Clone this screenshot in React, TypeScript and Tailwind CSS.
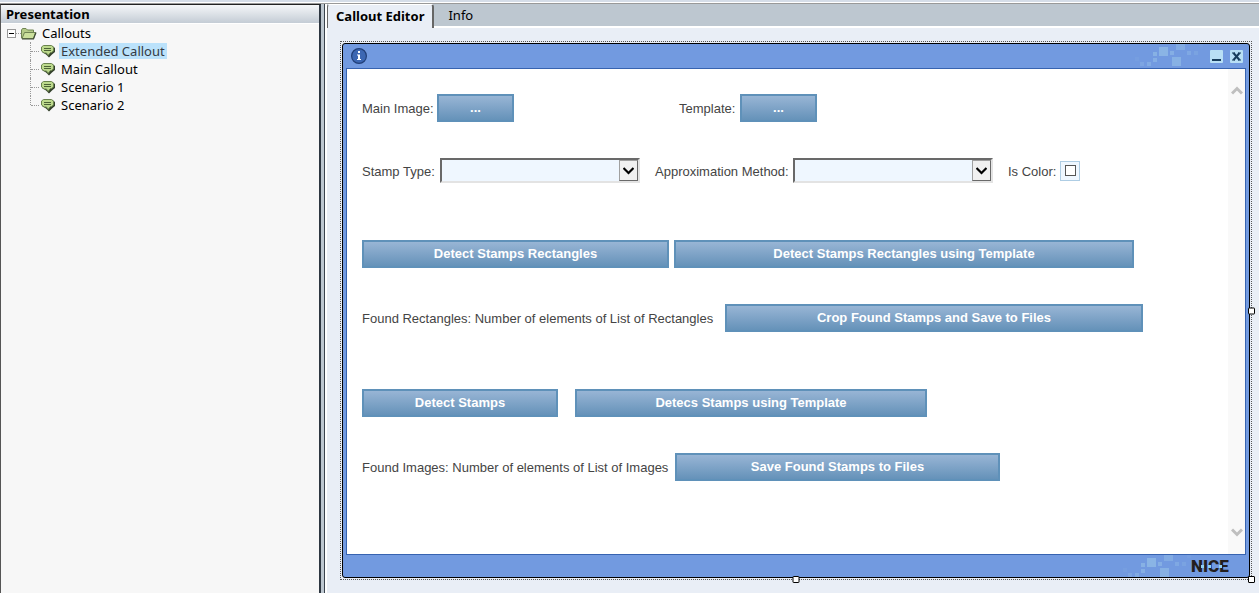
import { useState } from 'react';
import type { ReactNode } from 'react';

const callouts = ['Extended Callout', 'Main Callout', 'Scenario 1', 'Scenario 2'];

const squares = [
  { x: 0, y: 13, w: 4, h: 4, o: 0.08 },
  { x: 5, y: 18, w: 4, h: 4, o: 0.2 },
  { x: 12, y: 18, w: 4, h: 4, o: 0.3 },
  { x: 18, y: 14, w: 4, h: 4, o: 0.35 },
  { x: 18, y: 8, w: 4, h: 4, o: 0.4 },
  { x: 24, y: 3, w: 9, h: 9, o: 0.45 },
  { x: 35, y: 7, w: 4, h: 4, o: 0.35 },
  { x: 41, y: 0, w: 9, h: 6, o: 0.3 },
  { x: 37, y: 13, w: 9, h: 9, o: 0.4 },
  { x: 52, y: 7, w: 4, h: 4, o: 0.25 },
  { x: 59, y: 7, w: 4, h: 4, o: 0.15 },
  { x: 64, y: 0, w: 4, h: 3, o: 0.08 },
];

const SquaresPattern = () => (
  <svg width="68" height="22" viewBox="0 0 68 22" className="self-start" aria-hidden="true">
    {squares.map((s) => (
      <rect key={`${s.x}-${s.y}`} x={s.x} y={s.y} width={s.w} height={s.h} fill="#a8d4ea" opacity={s.o} />
    ))}
  </svg>
);

const FolderIcon = () => (
  <svg width="16" height="13" viewBox="0 0 16 13" aria-hidden="true">
    <path d="M0.500 11V3L1.500 1.500H5L6.500 3H12.500V11Z" fill="#b4cb88" stroke="#6f8353" />
    <path d="M1 11.500L3.500 5.500H14.500L12.500 11.500Z" fill="#cbe09c" stroke="#6f8353" />
    <path d="M1 12H12.500L15 5.500" fill="none" stroke="#3f4a35" strokeWidth="1.200" />
  </svg>
);

const CalloutIcon = () => (
  <svg width="15" height="14" viewBox="0 0 15 14" aria-hidden="true">
    <path d="M3 2H11.500L14 4V8L11 10.500L8 13.500L5 10.500L1 8V4Z" fill="#33402b" />
    <path d="M2.500 1.500H10.500L12.500 3V7L10.500 8.500H9.500L7 11.500L5.500 9H3L0.500 7V3Z" fill="#bcd98c" stroke="#6a834d" />
    <path d="M3 4.500H10M3 6.500H10" stroke="#4c6335" />
  </svg>
);

const InfoIcon = () => (
  <svg width="16" height="16" viewBox="0 0 16 16" aria-hidden="true">
    <circle cx="8" cy="8" r="7.4" fill="#3c67b3" stroke="#213f78" strokeWidth="1.2" />
    <path d="M7 3H9V5H7ZM6 6.500H9V11H10V12H6V11H7V7.500H6Z" fill="#fff" />
  </svg>
);

const Handle = ({ className }: { className: string }) => (
  <span className={`absolute h-[7px] w-[7px] rounded-[1px] border border-black bg-white ${className}`} />
);

const ActionButton = ({ className, children }: { className: string; children: ReactNode }) => (
  <button
    type="button"
    className={`h-7 shrink-0 border-2 border-[#5f91b9] bg-linear-to-b from-[#98b5d5] to-[#6592b9] pb-px text-[13px] leading-4 font-bold text-white ${className}`}
  >
    {children}
  </button>
);

const SelectField = ({ id, label, className }: { id: string; label: string; className: string }) => (
  <div className="flex items-center">
    <label htmlFor={id} className={`shrink-0 pt-0.5 ${className}`}>{label}</label>
    <div className="relative">
      <select
        id={id}
        className="block h-[25px] w-[200px] appearance-none rounded-none border-2 border-t-[#696969] border-r-[#e3e3e3] border-b-[#e3e3e3] border-l-[#696969] bg-[#eff7ff]"
      />
      <span className="pointer-events-none absolute top-0.5 right-0.5 flex h-[21px] w-[19px] items-center justify-center border border-t-[#a0a0a0] border-r-[#696969] border-b-[#696969] border-l-[#a0a0a0] bg-[#f0f0f0]">
        <svg width="11" height="8" viewBox="0 0 11 8" aria-hidden="true">
          <path d="M0.500 1L5.500 6L10.500 1" fill="none" stroke="#000" strokeWidth="2.2" />
        </svg>
      </span>
    </div>
  </div>
);

const Sidebar = () => {
  const [selected, setSelected] = useState(callouts[0]);

  return (
    <aside className="flex w-[321px] shrink-0 flex-col border-t border-r-2 border-l border-t-[#222] border-r-[#2d3640] border-l-[#555] bg-[#f7f7f7] text-[13px] leading-4">
      <h2 className="h-[19px] border-b border-white bg-linear-to-b from-[#f5f7f9] to-[#c4ccd5] pl-[5px] leading-[18px] font-bold">Presentation</h2>
      <div className="pl-1.5">
        <div className="flex h-[18px] items-center">
          <button type="button" aria-label="Collapse" className="flex h-[9px] w-[9px] items-center justify-center border border-[#999] bg-white">
            <span className="h-px w-[5px] bg-black" />
          </button>
          <span className="w-[5px] border-t border-dotted border-[#999]" />
          <FolderIcon />
          <span className="pl-[5px]">Callouts</span>
        </div>
        <ul className="ml-[23px]">
          {callouts.map((name) => (
            <li key={name} className="group flex h-[18px] items-center">
              <span className="h-full w-px border-l border-dotted border-[#999] group-last:h-[9px] group-last:self-start" />
              <span className="mr-0.5 w-2 border-t border-dotted border-[#999]" />
              <CalloutIcon />
              <button
                type="button"
                onClick={() => setSelected(name)}
                className={`ml-[3px] px-0.5 ${selected === name ? 'bg-[#bbe2fb] text-[#333a44]' : ''}`}
              >
                {name}
              </button>
            </li>
          ))}
        </ul>
      </div>
    </aside>
  );
};

const CalloutForm = () => (
  <form className="min-w-0 flex-1 pt-[25px] pl-[15px] text-[13px] leading-4 whitespace-nowrap text-[#444]">
    <div className="flex h-7 items-center">
      <span className="w-[75px] pt-0.5">Main Image:</span>
      <ActionButton className="w-[77px]">...</ActionButton>
      <span className="ml-[165px] w-[61px] pt-0.5">Template:</span>
      <ActionButton className="w-[77px]">...</ActionButton>
    </div>

    <div className="mt-9 flex items-center">
      <SelectField id="stamp-type" label="Stamp Type:" className="w-[78px]" />
      <div className="ml-[15px]">
        <SelectField id="method" label="Approximation Method:" className="w-[138px]" />
      </div>
      <label htmlFor="is-color" className="ml-[15px] w-[52px] pt-0.5">Is Color:</label>
      <span className="flex h-5 w-5 items-center justify-center border border-[#aecde4] bg-[#eff7ff]">
        <input id="is-color" type="checkbox" className="h-[11px] w-[11px] appearance-none border border-[#555] bg-white checked:bg-[#555]" />
      </span>
    </div>

    <div className="mt-[57px] flex items-center gap-[5px]">
      <ActionButton className="w-[307px]">Detect Stamps Rectangles</ActionButton>
      <ActionButton className="w-[460px]">Detect Stamps Rectangles using Template</ActionButton>
    </div>

    <div className="mt-9 flex items-center">
      <span className="w-[363px] pt-0.5">Found Rectangles: Number of elements of List of Rectangles</span>
      <ActionButton className="w-[418px]">Crop Found Stamps and Save to Files</ActionButton>
    </div>

    <div className="mt-[57px] flex items-center gap-[17px]">
      <ActionButton className="w-[196px]">Detect Stamps</ActionButton>
      <ActionButton className="w-[352px]">Detecs Stamps using Template</ActionButton>
    </div>

    <div className="mt-9 flex items-center">
      <span className="w-[313px] pt-0.5">Found Images: Number of elements of List of Images</span>
      <ActionButton className="w-[325px]">Save Found Stamps to Files</ActionButton>
    </div>
  </form>
);

const CalloutWindow = () => (
  <div className="relative flex flex-1 flex-col border border-dotted border-[#555] p-px font-['Liberation_Sans',Arial,sans-serif]">
    <section className="flex flex-1 flex-col rounded-[3px] border border-black bg-[#729ae0]">
      <header className="flex h-6 items-center pr-1.5 pl-2">
        <InfoIcon />
        <div className="ml-auto flex items-center gap-[7px] self-stretch">
          <SquaresPattern />
          <button type="button" aria-label="Minimize" className="flex h-[13px] w-[13px] items-end justify-center rounded-[1px] bg-[#b8dff5] pb-0.5">
            <span className="h-0.5 w-[9px] bg-[#173c5c]" />
          </button>
          <button type="button" aria-label="Close" className="flex h-[13px] w-[13px] items-center justify-center rounded-[1px] bg-[#b8dff5]">
            <svg width="9" height="9" viewBox="0 0 9 9" aria-hidden="true">
              <path d="M1.500 1L7.500 8M7.500 1L1.500 8" stroke="#173c5c" strokeWidth="2" />
              <path d="M0 1H3M6 1H9M0 8H3M6 8H9" stroke="#173c5c" />
            </svg>
          </button>
        </div>
      </header>

      <div className="mx-[3px] flex flex-1 border border-[#3763b0] bg-white">
        <CalloutForm />
        <div className="flex w-[17px] flex-col items-center justify-between bg-[#f9f9f9] py-[17px]">
          <svg width="12" height="9" viewBox="0 0 12 9" aria-hidden="true">
            <path d="M1 7.500L6 2.500L11 7.500" fill="none" stroke="#bfbfbf" strokeWidth="3" />
          </svg>
          <svg width="12" height="9" viewBox="0 0 12 9" aria-hidden="true">
            <path d="M1 1.500L6 6.500L11 1.500" fill="none" stroke="#bfbfbf" strokeWidth="3" />
          </svg>
        </div>
      </div>

      <footer className="flex h-[22px] items-center justify-end pr-5">
        <SquaresPattern />
        <span className="relative w-[38px] font-[Roboto,'Liberation_Sans',sans-serif] text-[17px] leading-[22px] font-black text-[#231f20]">
          NICE
          <span className="absolute top-2.5 left-2.5 h-[3px] w-[3px] bg-[#8fd0f5]" />
          <span className="absolute top-2.5 left-[17px] h-[3px] w-[3px] bg-[#8fd0f5]" />
          <span className="absolute top-2.5 left-7 h-[3px] w-[3px] bg-[#8fd0f5]" />
        </span>
      </footer>
    </section>

    <Handle className="top-1/2 -right-1 -translate-y-1/2" />
    <Handle className="-bottom-1 left-1/2 -translate-x-1/2" />
    <Handle className="-right-1 -bottom-1" />
  </div>
);

const App = () => (
  <div className="flex h-screen min-h-[560px] flex-col bg-[#bdc7d0] font-['Noto_Sans',Tahoma,sans-serif] text-black">
    <div className="h-[3px] shrink-0 border-b border-white bg-[#d5dde8]" />
    <div className="flex flex-1 border-t border-[#999]">
      <Sidebar />
      <div className="w-1 shrink-0 border-r border-[#3a434d] bg-[#bdc7d0]" />
      <main className="flex min-w-0 flex-1 flex-col border-l-2 border-white">
        <nav className="flex h-[22px] text-[13px] leading-[22px]">
          <button type="button" className="relative -mb-0.5 rounded-t-[3px] border-t border-r-2 border-l border-t-white border-r-[#666] border-l-[#666] bg-[#e9eef6] px-2 pb-0.5 font-bold">
            Callout Editor
          </button>
          <button type="button" className="px-3.5">Info</button>
        </nav>
        <div className="flex flex-1 flex-col border-t-2 border-white bg-[#e9eef6] pt-[13px] pr-[7px] pb-[13px] pl-[13px]">
          <CalloutWindow />
        </div>
      </main>
    </div>
  </div>
);

export default App;
